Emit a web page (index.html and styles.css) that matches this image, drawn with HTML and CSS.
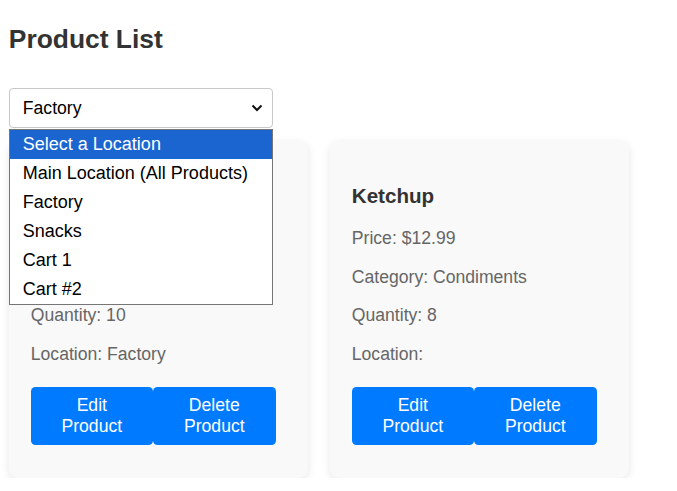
FILE: index.html
```html
<!DOCTYPE html>
<html>
<head>
<meta charset="utf-8">
<link rel="stylesheet" href="styles.css">
</head>
<body>
<div class="page">
  <h1 class="title">Product List</h1>
  <div class="picker">
    <div class="select-box">
      <span class="select-value">Factory</span>
      <svg class="chevron" width="12" height="8" viewBox="0 0 12 8"><path d="M1.5 1.5 L6 6 L10.5 1.5" fill="none" stroke="#111" stroke-width="2"/></svg>
    </div>
    <ul class="options">
      <li class="option active">Select a Location</li>
      <li class="option">Main Location (All Products)</li>
      <li class="option">Factory</li>
      <li class="option">Snacks</li>
      <li class="option">Cart 1</li>
      <li class="option">Cart #2</li>
    </ul>
  </div>
  <div class="cards">
    <div class="card">
      <h3 class="card-title">Mustard</h3>
      <p class="field">Price: $4.99</p>
      <p class="field">Category: Condiments</p>
      <p class="field">Quantity: 10</p>
      <p class="field">Location: Factory</p>
      <div class="actions">
        <button class="btn">Edit Product</button>
        <button class="btn">Delete Product</button>
      </div>
    </div>
    <div class="card">
      <h3 class="card-title">Ketchup</h3>
      <p class="field">Price: $12.99</p>
      <p class="field">Category: Condiments</p>
      <p class="field">Quantity: 8</p>
      <p class="field">Location: </p>
      <div class="actions">
        <button class="btn">Edit Product</button>
        <button class="btn">Delete Product</button>
      </div>
    </div>
  </div>
</div>
</body>
</html>
```
FILE: styles.css
```css
html, body {
  margin: 0;
  padding: 0;
  background: #fff;
}
body {
  font-family: "Liberation Sans", Arial, sans-serif;
  color: #333;
}
.page {
  padding: 0 8.8px;
}
.title {
  font-size: 26.4px;
  font-weight: bold;
  color: #333;
  margin: 0;
  padding-top: 24px;
  line-height: 30px;
  margin-bottom: 34px;
}
.picker {
  position: relative;
  width: 264px;
}
.select-box {
  box-sizing: border-box;
  height: 40px;
  border: 1px solid #c8c8c8;
  border-radius: 4px;
  display: flex;
  align-items: center;
  justify-content: space-between;
  padding: 0 9px 0 13px;
  font-size: 17.6px;
  color: #000;
  background: #fff;
}
.chevron {
  display: block;
}
.options {
  position: absolute;
  left: 0;
  top: 41px;
  width: 264px;
  box-sizing: border-box;
  margin: 0;
  padding: 0;
  list-style: none;
  border: 1px solid #767676;
  background: #fff;
  z-index: 10;
}
.option {
  height: 29px;
  line-height: 29px;
  padding-left: 13px;
  font-size: 18px;
  color: #000;
}
.option.active {
  background: #1b65d1;
  color: #fff;
}
.cards {
  display: grid;
  grid-template-columns: 299px 299px;
  gap: 22px;
  margin-top: 13px;
}
.card {
  background: #f9f9f9;
  border-radius: 9px;
  padding: 22px 22px 33px;
  box-shadow: 0 2px 8px rgba(0, 0, 0, 0.1);
}
.card-title {
  font-size: 20.6px;
  font-weight: bold;
  color: #333;
  margin: 20.6px 0;
  line-height: 24px;
}
.field {
  font-size: 17.6px;
  line-height: 21px;
  color: #666;
  margin: 0 0 17.6px;
}
.actions {
  display: grid;
  grid-template-columns: 122px 123px;
  margin-top: 22px;
}
.btn {
  background: #007bff;
  color: #fff;
  border: none;
  border-radius: 4.4px;
  font-family: "Liberation Sans", Arial, sans-serif;
  font-size: 17.6px;
  line-height: 20.5px;
  padding: 8.5px 17.6px;
  height: 58px;
}
```
